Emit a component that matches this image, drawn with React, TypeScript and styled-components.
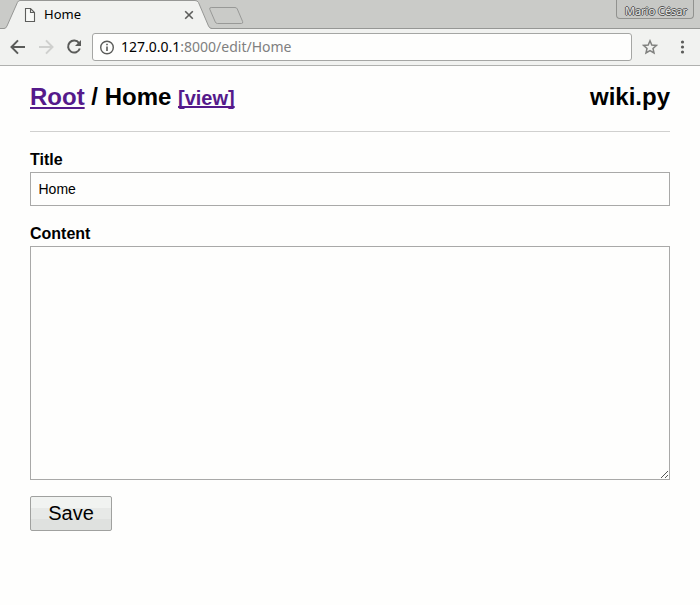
import React from "react";
import styled, { createGlobalStyle } from "styled-components";

const GlobalStyle = createGlobalStyle`
  * { box-sizing: border-box; }
  body { margin: 0; background: #fefefd; overflow: hidden; }
`;

const Browser = styled.div`
  display: flex;
  flex-direction: column;
  height: 605px;
  background: #fefefd;
  font-family: "Noto Sans", "Open Sans", sans-serif;
`;

const TabStrip = styled.div`
  display: flex;
  flex: none;
  height: 29px;
  background: #cacbc8;
  border-bottom: 1px solid #969795;
`;

const Tab = styled.div`
  position: relative;
  display: flex;
  align-items: center;
  flex: none;
  width: 209px;
  height: 29px;
  padding-left: 24px;
`;

const TabShape = styled.svg`
  position: absolute;
  left: 0;
  top: 0;
`;

const FileIcon = styled.svg`
  position: relative;
  flex: none;
`;

const TabTitle = styled.span`
  position: relative;
  flex: 1;
  margin-left: 8px;
  font-size: 13px;
  line-height: 28px;
  height: 29px;
  color: #000;
`;

const CloseIcon = styled.svg`
  position: relative;
  flex: none;
  margin-right: 15px;
`;

const NewTab = styled.svg`
  flex: none;
  margin-top: 6px;
`;

const Profile = styled.div`
  width: 78px;
  height: 19px;
  margin: 0 6px 0 auto;
  padding-left: 2px;
  border: 1px solid #91928f;
  border-top: 0;
  border-radius: 0 0 4px 4px;
  background: #c7c8c5;
  color: #e9eae8;
  font-size: 11px;
  line-height: 22px;
  text-align: center;
  white-space: nowrap;
  text-shadow: 1px 0 #555, -1px 0 #555, 0 1px #555, 0 -1px #555;
`;

const Toolbar = styled.div`
  display: flex;
  align-items: center;
  flex: none;
  height: 37px;
  padding: 0 10px;
  background: #f1f2f0;
  border-bottom: 1px solid #b0b1af;
`;

const NavIcons = styled.svg`
  flex: none;
  margin-right: 10px;
`;

const AddressBar = styled.div`
  display: flex;
  align-items: center;
  width: 540px;
  height: 28px;
  padding-left: 7px;
  border: 1px solid #a5a6a4;
  border-radius: 3px;
  background: #fefefd;
`;

const Url = styled.span`
  margin-left: 6px;
  font-size: 14px;
  line-height: 26px;
  color: #808080;
`;

const Host = styled.span`
  color: #000;
`;

const StarIcon = styled.svg`
  margin-left: 10px;
`;

const MenuIcon = styled.svg`
  margin-left: 22px;
`;

const Page = styled.main`
  padding: 0 30px;
  font-family: "Liberation Sans", Arial, sans-serif;
  color: #000;
`;

const PageHeader = styled.header`
  display: flex;
  justify-content: space-between;
  height: 66px;
  padding-top: 17px;
  border-bottom: 1px solid #d0d0cf;
`;

const Heading = styled.h1`
  margin: 0;
  font-size: 24px;
  line-height: 28px;
  font-weight: bold;
`;

const WikiLink = styled.a<{ $small?: boolean }>`
  color: #551a8b;
  text-decoration: underline;
  text-decoration-skip-ink: none;
  text-decoration-thickness: 2px;
  text-underline-offset: ${(p) => (p.$small ? "1px" : "2px")};
  font-size: ${(p) => (p.$small ? "20px" : "24px")};
`;

const Label = styled.label<{ $gap: number }>`
  display: block;
  margin-top: ${(p) => p.$gap}px;
  margin-bottom: 3px;
  font-size: 16px;
  line-height: 18px;
  font-weight: bold;
`;

const TitleInput = styled.input`
  display: block;
  width: 100%;
  height: 34px;
  padding: 0 7.5px;
  border: 1px solid #a9a9a8;
  border-radius: 0;
  outline: none;
  background: #fefefd;
  color: #000;
  font: 14px "Liberation Sans", Arial, sans-serif;
`;

const ContentBox = styled.div`
  position: relative;
  height: 234px;
`;

const ContentArea = styled.textarea`
  display: block;
  width: 100%;
  height: 100%;
  padding: 8px;
  border: 1px solid #a9a9a8;
  border-radius: 0;
  outline: none;
  resize: none;
  background: #fefefd;
  font: 14px "Liberation Sans", Arial, sans-serif;
`;

const Grip = styled.svg`
  position: absolute;
  right: 1px;
  bottom: 1px;
  pointer-events: none;
`;

const SaveButton = styled.button`
  display: block;
  width: 82px;
  height: 35px;
  margin-top: 16px;
  padding: 0;
  border: 1px solid #a0a19f;
  border-radius: 2px;
  background: linear-gradient(#f1f3f1 0 11px, #e7e9e7 11px 22px, #dfe1df 22px);
  color: #000;
  font: 20px/33px "Liberation Sans", Arial, sans-serif;
`;

export default function App() {
  return (
    <Browser>
      <GlobalStyle />
      <TabStrip>
        <Tab>
          <TabShape width="212" height="29" viewBox="0 0 212 29">
            <path d="M0 28.5H4Q6 28.5 7 26L17.4 2.5Q18.3.5 20 .5H195Q197.5.5 198.5 2.5L208.5 26Q209.5 28.5 211 28.5V29H0Z" fill="#f1f2f0" />
            <path d="M0 28.5H4Q6 28.5 7 26L17.4 2.5Q18.3.5 20 .5H195Q197.5.5 198.5 2.5L208.5 26Q209.5 28.5 212 28.5" fill="none" stroke="#969795" />
          </TabShape>
          <FileIcon width="12" height="14" viewBox="0 0 12 14">
            <path d="M1.5.5H6.5L10.5 4.5V13.5H1.5ZM6.5.5V4.5H10.5" fill="#f8f9f7" stroke="#5c5d5b" strokeWidth="1.1" />
          </FileIcon>
          <TabTitle>Home</TabTitle>
          <CloseIcon width="10" height="10" viewBox="0 0 10 10">
            <path d="M1.2 1.2L8.8 8.8M8.8 1.2L1.2 8.8" stroke="#5c5d5b" strokeWidth="1.6" />
          </CloseIcon>
        </Tab>
        <NewTab width="36" height="20" viewBox="0 0 36 20">
          <path d="M2.2 1.5H26Q27.7 1.5 28.3 3L33.6 15.5Q34.2 17.5 32.5 17.5H8.5Q7 17.5 6.3 16L.8 3.3Q.2 1.5 2.2 1.5Z" fill="#cacbc8" stroke="#989997" />
        </NewTab>
        <Profile>Mario César</Profile>
      </TabStrip>
      <Toolbar>
        <NavIcons width="72" height="16" viewBox="0 0 72 16">
          <g fill="none" stroke="#5a5b59" strokeWidth="2">
            <path d="M15 8H2M8 1.4L1.5 8L8 14.6" />
            <path d="M29 8H42M36 1.4L42.5 8L36 14.6" stroke="#cfd0ce" />
            <path d="M69 4.1A6 6 0 1 0 69.8 9.5" />
          </g>
          <path d="M71 1V7H65Z" fill="#5a5b59" />
        </NavIcons>
        <AddressBar>
          <svg width="15" height="15" viewBox="0 0 15 15">
            <circle cx="7" cy="7.5" r="6.3" fill="none" stroke="#5a5b59" strokeWidth="1.4" />
            <path d="M7 6.5V11M7 3.8V5.3" stroke="#5a5b59" strokeWidth="1.6" />
          </svg>
          <Url><Host>127.0.0.1</Host>:8000/edit/Home</Url>
        </AddressBar>
        <StarIcon width="16" height="16" viewBox="0 0 16 16">
          <path d="M8 1.8L9.8 6L14.4 6.4L11 9.5L12 14L8 11.6L4 14L5 9.5L1.6 6.4L6.2 6Z" fill="none" stroke="#80817f" strokeWidth="1.5" />
        </StarIcon>
        <MenuIcon width="5" height="14" viewBox="0 0 5 14">
          <g fill="#5a5b59">
            <circle cx="2.5" cy="2" r="1.6" />
            <circle cx="2.5" cy="7" r="1.6" />
            <circle cx="2.5" cy="12" r="1.6" />
          </g>
        </MenuIcon>
      </Toolbar>
      <Page>
        <PageHeader>
          <Heading>
            <WikiLink href="#">Root</WikiLink> / Home <WikiLink href="#" $small>[view]</WikiLink>
          </Heading>
          <Heading>wiki.py</Heading>
        </PageHeader>
        <Label htmlFor="title" $gap={19}>Title</Label>
        <TitleInput id="title" defaultValue="Home" />
        <Label htmlFor="content" $gap={19}>Content</Label>
        <ContentBox>
          <ContentArea id="content" />
          <Grip width="9" height="9" viewBox="0 0 9 9">
            <path d="M1 8L8 1M5 8L8 5" stroke="#555654" strokeWidth="1" />
          </Grip>
        </ContentBox>
        <SaveButton type="button">Save</SaveButton>
      </Page>
    </Browser>
  );
}
